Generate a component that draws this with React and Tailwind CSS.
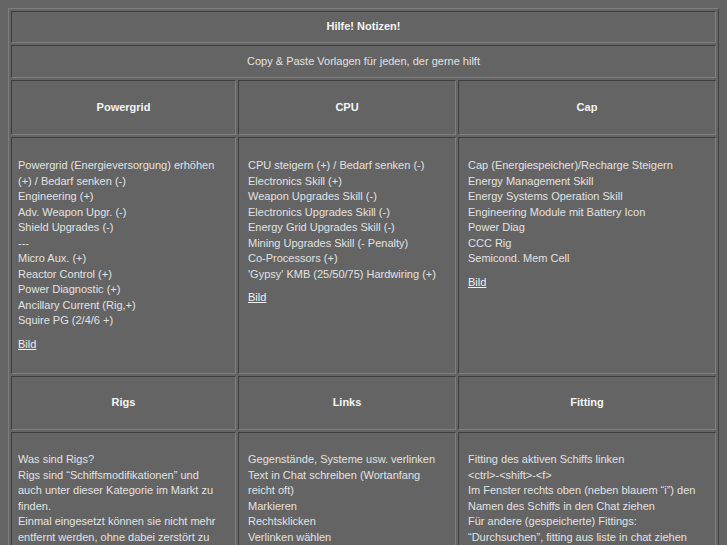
import React from "react";

const cell =
  "border border-t-[#3e3e3e] border-l-[#3e3e3e] border-b-[#7e7e7e] border-r-[#7e7e7e]";

const columns = [
  {
    title: "Powergrid",
    lines: [
      "Powergrid (Energieversorgung) erhöhen (+) / Bedarf senken (-)",
      "Engineering (+)",
      "Adv. Weapon Upgr. (-)",
      "Shield Upgrades (-)",
      "---",
      "Micro Aux. (+)",
      "Reactor Control (+)",
      "Power Diagnostic (+)",
      "Ancillary Current (Rig,+)",
      "Squire PG (2/4/6 +)",
    ],
    pad: "pl-[6px] pr-[12px]",
  },
  {
    title: "CPU",
    lines: [
      "CPU steigern (+) / Bedarf senken (-)",
      "Electronics Skill (+)",
      "Weapon Upgrades Skill (-)",
      "Electronics Upgrades Skill (-)",
      "Energy Grid Upgrades Skill (-)",
      "Mining Upgrades Skill (- Penalty)",
      "Co-Processors (+)",
      "'Gypsy' KMB (25/50/75) Hardwiring (+)",
    ],
    pad: "pl-[9px] pr-[8px]",
  },
  {
    title: "Cap",
    lines: [
      "Cap (Energiespeicher)/Recharge Steigern",
      "Energy Management Skill",
      "Energy Systems Operation Skill",
      "Engineering Module mit Battery Icon",
      "Power Diag",
      "CCC Rig",
      "Semicond. Mem Cell",
    ],
    pad: "pl-[9px] pr-[8px]",
  },
];

const second = [
  {
    title: "Rigs",
    lines: [
      "Was sind Rigs?",
      "Rigs sind \u201cSchiffsmodifikationen\u201d und auch unter dieser Kategorie im Markt zu finden.",
      "Einmal eingesetzt können sie nicht mehr entfernt werden, ohne dabei zerstört zu werden.",
      "Rigs verbrauchen Calibration statt CPU oder Powergrid.",
    ],
    pad: "pl-[6px] pr-[12px]",
  },
  {
    title: "Links",
    lines: [
      "Gegenstände, Systeme usw. verlinken",
      "Text in Chat schreiben (Wortanfang reicht oft)",
      "Markieren",
      "Rechtsklicken",
      "Verlinken wählen",
    ],
    pad: "pl-[9px] pr-[8px]",
  },
  {
    title: "Fitting",
    lines: [
      "Fitting des aktiven Schiffs linken",
      "<ctrl>-<shift>-<f>",
      "Im Fenster rechts oben (neben blauem \u201ci\u201d) den Namen des Schiffs in den Chat ziehen",
      "Für andere (gespeicherte) Fittings:",
      "\u201cDurchsuchen\u201d, fitting aus liste in chat ziehen",
    ],
    pad: "pl-[9px] pr-[8px]",
  },
];

function Header({ title, h }) {
  return (
    <div className={`${cell} ${h} flex items-center justify-center font-bold text-[#f4f4f4]`}>
      {title}
    </div>
  );
}

function Body({ lines, pad, link, top }) {
  return (
    <div className={`${cell} ${pad} ${top} pb-[21px]`}>
      {lines.map((l, i) => (
        <div key={i}>{l}</div>
      ))}
      {link && (
        <a href="#" className="mt-[8px] block w-fit underline text-[#f0f0f0]">
          Bild
        </a>
      )}
    </div>
  );
}

export default function App() {
  return (
    <div className="min-h-screen bg-[#646464] p-2 font-['Liberation_Sans',Arial,sans-serif] text-[11px] leading-[15.5px] text-[#e2e2e2]">
      <div className="border border-t-[#7e7e7e] border-l-[#7e7e7e] border-b-[#3e3e3e] border-r-[#3e3e3e] p-[2px] grid grid-cols-[225px_218px_1fr] gap-[2px]">
        <div className={`${cell} col-span-3 h-[32px] flex items-center justify-center font-bold text-[#f4f4f4]`}>
          Hilfe! Notizen!
        </div>
        <div className={`${cell} col-span-3 h-[33px] flex items-center justify-center`}>
          Copy &amp; Paste Vorlagen für jeden, der gerne hilft
        </div>
        {columns.map((c) => (
          <Header key={c.title} title={c.title} h="h-[55px]" />
        ))}
        {columns.map((c) => (
          <Body key={c.title} lines={c.lines} pad={c.pad} top="pt-[20px]" link />
        ))}
        {second.map((c) => (
          <Header key={c.title} title={c.title} h="h-[54px]" />
        ))}
        {second.map((c) => (
          <Body key={c.title} lines={c.lines} pad={c.pad} top="pt-[19px]" />
        ))}
      </div>
    </div>
  );
}
